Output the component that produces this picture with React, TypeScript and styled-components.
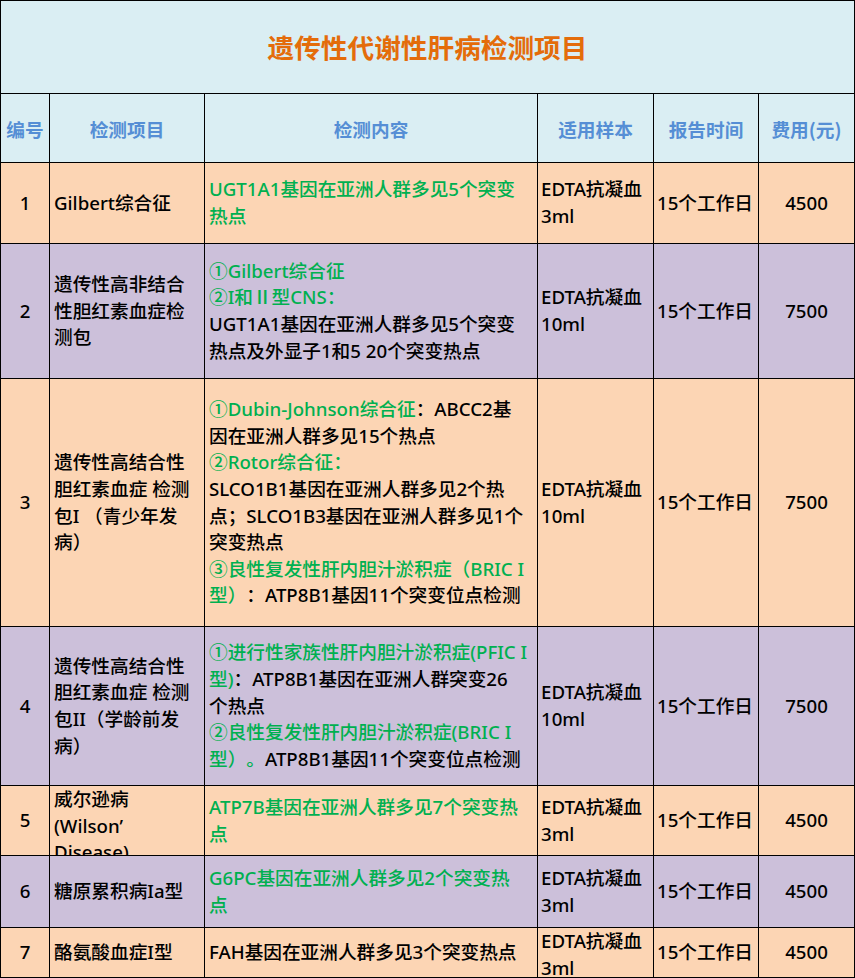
import React from "react";
import styled, { createGlobalStyle } from "styled-components";

const GlobalStyle = createGlobalStyle`
  html, body { margin: 0; padding: 0; background: #fff; }
  * { box-sizing: border-box; }
`;

const PEACH = "#FCD5B4";
const LAVENDER = "#CCC0DA";
const SKY = "#DAEEF3";
const GREEN = "#00B050";

const Sheet = styled.div`
  width: 855px;
  display: grid;
  grid-template-columns: 48px 154px 332px 115px 104px 95px;
  grid-template-rows: 92px 68px 80px 134px 247px 158px 69px 71px 49px;
  gap: 1px;
  padding: 1px;
  background: #000;
  font-family: "Noto Sans", "Noto Sans CJK SC", sans-serif;
  text-spacing-trim: space-all;
`;

const Title = styled.div`
  grid-column: 1 / -1;
  background: ${SKY};
  display: flex;
  align-items: center;
  justify-content: center;
  color: #E46C0A;
  font-weight: 700;
  font-size: 26.67px;
  line-height: 1;
  font-family: "Noto Sans CJK SC", sans-serif;
`;

const HeadCell = styled.div`
  background: ${SKY};
  display: flex;
  align-items: center;
  justify-content: center;
  color: #558ED5;
  font-weight: 700;
  font-size: 18.67px;
  white-space: nowrap;
  overflow: hidden;
  font-family: "Noto Sans CJK SC", sans-serif;
`;

const Cell = styled.div<{ $bg: string; $center?: boolean; $top?: boolean; $pad?: number }>`
  background: ${(p) => p.$bg};
  display: flex;
  flex-direction: column;
  justify-content: ${(p) => (p.$top ? "flex-start" : "center")};
  align-items: ${(p) => (p.$center ? "center" : "flex-start")};
  padding: 0 ${(p) => p.$pad ?? 4}px;
  overflow: hidden;
  white-space: nowrap;
  color: #000;
  font-size: 18.67px;
  line-height: 26.67px;
  font-weight: 500;
  text-spacing-trim: space-all;
`;

const Line = styled.div`
  height: 26.67px;
  flex-shrink: 0;
`;

const Seg = styled.span<{ $green?: boolean }>`
  color: ${(p) => (p.$green ? GREEN : "#000")};
`;

type Part = { t: string; g?: boolean };
const g = (t: string): Part => ({ t, g: true });
const k = (t: string): Part => ({ t });

type Row = {
  no: string;
  bg: string;
  item: string[];
  itemTop?: boolean;
  content: Part[][];
  sample: string[];
  sampleTop?: boolean;
  time: string;
  fee: string;
};

const rows: Row[] = [
  {
    no: "1",
    bg: PEACH,
    item: ["Gilbert综合征"],
    content: [[g("UGT1A1基因在亚洲人群多见5个突变")], [g("热点")]],
    sample: ["EDTA抗凝血", "3ml"],
    time: "15个工作日",
    fee: "4500",
  },
  {
    no: "2",
    bg: LAVENDER,
    item: ["遗传性高非结合", "性胆红素血症检", "测包"],
    content: [
      [g("①Gilbert综合征")],
      [g("②I和Ⅱ型CNS：")],
      [k("UGT1A1基因在亚洲人群多见5个突变")],
      [k("热点及外显子1和5 20个突变热点")],
    ],
    sample: ["EDTA抗凝血", "10ml"],
    time: "15个工作日",
    fee: "7500",
  },
  {
    no: "3",
    bg: PEACH,
    item: ["遗传性高结合性", "胆红素血症 检测", "包I （青少年发", "病）"],
    content: [
      [g("①Dubin-Johnson综合征"), k("：ABCC2基")],
      [k("因在亚洲人群多见15个热点")],
      [g("②Rotor综合征：")],
      [k("SLCO1B1基因在亚洲人群多见2个热")],
      [k("点；SLCO1B3基因在亚洲人群多见1个")],
      [k("突变热点")],
      [g("③良性复发性肝内胆汁淤积症（BRIC I")],
      [g("型）"), k("：ATP8B1基因11个突变位点检测")],
    ],
    sample: ["EDTA抗凝血", "10ml"],
    time: "15个工作日",
    fee: "7500",
  },
  {
    no: "4",
    bg: LAVENDER,
    item: ["遗传性高结合性", "胆红素血症 检测", "包II（学龄前发", "病）"],
    content: [
      [g("①进行性家族性肝内胆汁淤积症(PFIC I")],
      [g("型)"), k("：ATP8B1基因在亚洲人群突变26")],
      [k("个热点")],
      [g("②良性复发性肝内胆汁淤积症(BRIC I")],
      [g("型）。"), k("ATP8B1基因11个突变位点检测")],
    ],
    sample: ["EDTA抗凝血", "10ml"],
    time: "15个工作日",
    fee: "7500",
  },
  {
    no: "5",
    bg: PEACH,
    item: ["威尔逊病", "(Wilson’", "Disease)"],
    itemTop: true,
    content: [[g("ATP7B基因在亚洲人群多见7个突变热")], [g("点")]],
    sample: ["EDTA抗凝血", "3ml"],
    time: "15个工作日",
    fee: "4500",
  },
  {
    no: "6",
    bg: LAVENDER,
    item: ["糖原累积病Ia型"],
    content: [[g("G6PC基因在亚洲人群多见2个突变热")], [g("点")]],
    sample: ["EDTA抗凝血", "3ml"],
    time: "15个工作日",
    fee: "4500",
  },
  {
    no: "7",
    bg: PEACH,
    item: ["酪氨酸血症I型"],
    content: [[k("FAH基因在亚洲人群多见3个突变热点")]],
    sample: ["EDTA抗凝血", "3ml"],
    sampleTop: true,
    time: "15个工作日",
    fee: "4500",
  },
];

const headers = ["编号", "检测项目", "检测内容", "适用样本", "报告时间", "费用(元)"];

export default function App() {
  return (
    <>
      <GlobalStyle />
      <Sheet>
        <Title>遗传性代谢性肝病检测项目</Title>
        {headers.map((h) => (
          <HeadCell key={h}>{h}</HeadCell>
        ))}
        {rows.map((r) => (
          <React.Fragment key={r.no}>
            <Cell $bg={r.bg} $center>
              {r.no}
            </Cell>
            <Cell $bg={r.bg} $top={r.itemTop}>
              {r.item.map((l, i) => (
                <Line key={i}>{l}</Line>
              ))}
            </Cell>
            <Cell $bg={r.bg}>
              {r.content.map((line, i) => (
                <Line key={i}>
                  {line.map((p, j) => (
                    <Seg key={j} $green={p.g}>
                      {p.t}
                    </Seg>
                  ))}
                </Line>
              ))}
            </Cell>
            <Cell $bg={r.bg} $top={r.sampleTop} $pad={3}>
              {r.sample.map((l, i) => (
                <Line key={i}>{l}</Line>
              ))}
            </Cell>
            <Cell $bg={r.bg} $pad={3}>
              {r.time}
            </Cell>
            <Cell $bg={r.bg} $center>
              {r.fee}
            </Cell>
          </React.Fragment>
        ))}
      </Sheet>
    </>
  );
}
